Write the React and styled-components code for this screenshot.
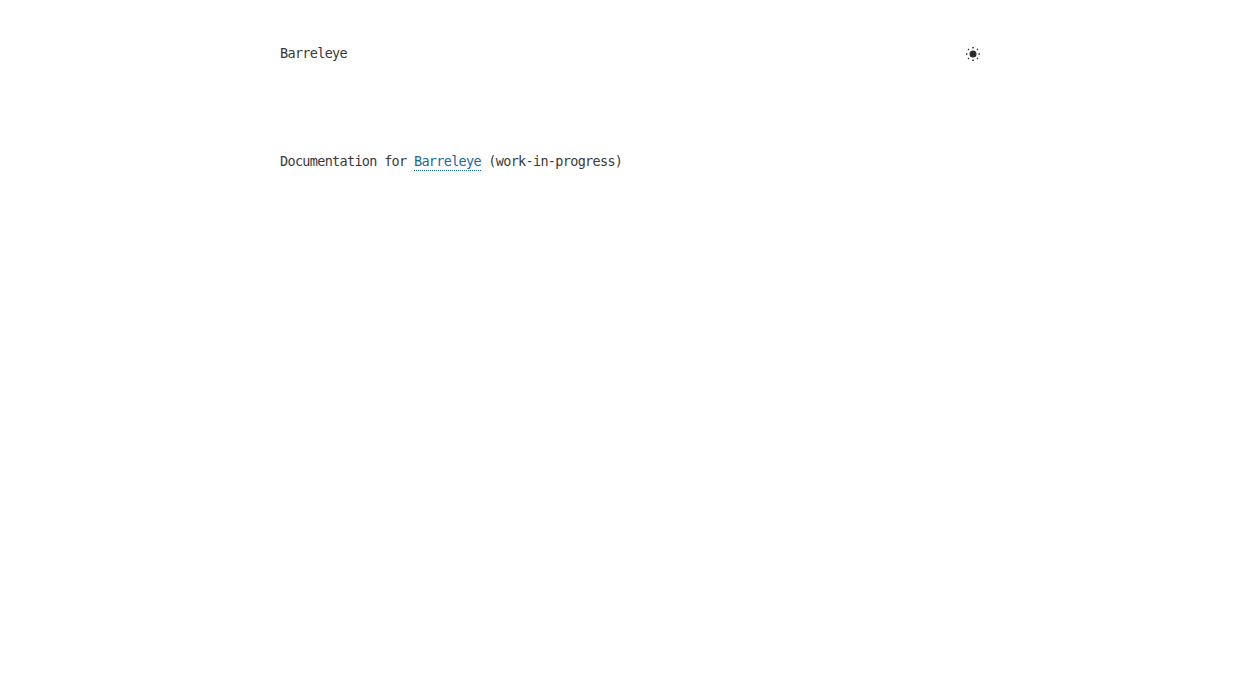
import React from 'react';
import styled, { createGlobalStyle } from 'styled-components';

const GlobalStyle = createGlobalStyle`
  html, body {
    margin: 0;
    padding: 0;
    background: #ffffff;
  }
`;

const Page = styled.div`
  width: 700px;
  margin: 0 auto;
  color: #3a3a3a;
  font-family: "DejaVu Sans Mono", "Liberation Mono", monospace;
  font-size: 13.5px;
  letter-spacing: -0.687px;
  line-height: 18px;
`;

const Header = styled.header`
  display: flex;
  justify-content: space-between;
  align-items: flex-start;
  padding-top: 44px;
`;

const Brand = styled.div`
  height: 20px;
`;

const ThemeToggle = styled.button`
  display: flex;
  width: 16px;
  height: 16px;
  margin: 2px -1px 0 0;
  padding: 0;
  border: 0;
  background: none;
  color: #2b2b2b;
`;

const Main = styled.main`
  padding-top: 88px;
`;

const Intro = styled.p`
  margin: 0;
`;

const DocLink = styled.a`
  display: inline-block;
  padding-bottom: 1px;
  color: #1a6a9a;
  text-decoration: none;
  background: linear-gradient(to right, #1a6a9a 50%, transparent 50%) left bottom / 2px 1px repeat-x;
`;

const SunIcon = () => (
  <svg width="16" height="16" viewBox="0 0 16 16" fill="currentColor">
    <circle cx="8" cy="8" r="3.5" />
    <g stroke="currentColor" strokeWidth="1.5" strokeLinecap="butt">
      <path d="M8 1v1.4M8 13.6V15M1 8h1.4M13.6 8H15" />
      <path d="M3.1 3.1l.8.8M12.1 12.1l.8.8M3.1 12.9l.8-.8M12.1 3.9l.8-.8" />
    </g>
  </svg>
);

export default function App() {
  return (
    <>
      <GlobalStyle />
      <Page>
        <Header>
          <Brand>Barreleye</Brand>
          <ThemeToggle aria-label="Toggle theme">
            <SunIcon />
          </ThemeToggle>
        </Header>
        <Main>
          <Intro>
            Documentation for <DocLink href="#">Barreleye</DocLink> (work-in-progress)
          </Intro>
        </Main>
      </Page>
    </>
  );
}
